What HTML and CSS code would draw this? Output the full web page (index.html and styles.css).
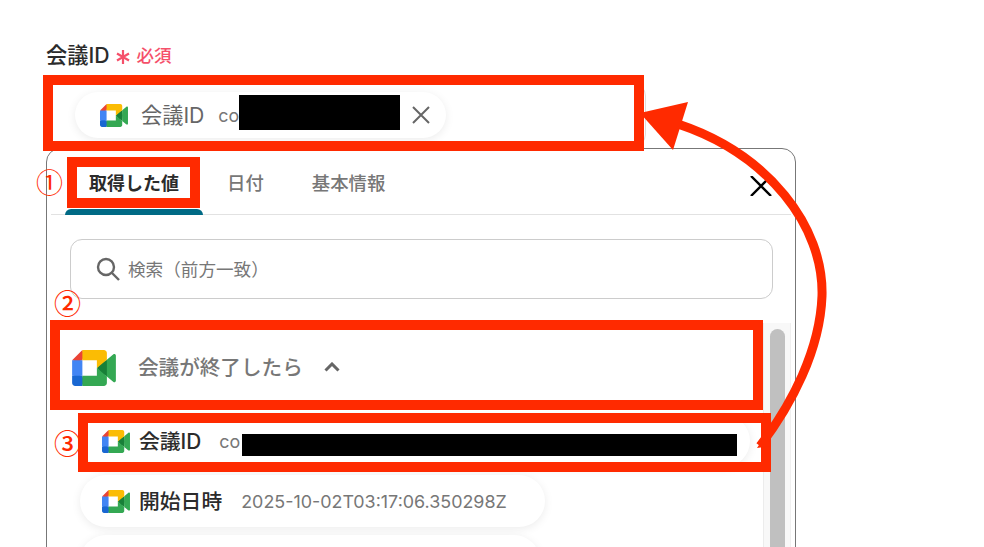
FILE: index.html
```html
<!DOCTYPE html>
<html lang="ja">
<head>
    <meta charset="UTF-8">
    <meta name="viewport" content="width=device-width, initial-scale=1.0">
    <title>会議ID</title>
    <link rel="stylesheet" href="styles.css">
</head>
<body>
    <svg class="defs" width="0" height="0">
        <symbol id="meet" viewBox="0 0 87.5 72">
            <path fill="#188038" d="M49.5 36l8.53 9.75 11.47 7.33 2-17.02-2-16.64-11.69 6.44z"/>
            <path fill="#1967d2" d="M0 51.5V66c0 3.315 2.685 6 6 6h14.5l3-10.96-3-9.54-9.95-3z"/>
            <path fill="#ea4335" d="M20.5 0L0 20.5l10.55 3 9.95-3 2.95-9.41z"/>
            <path fill="#4285f4" d="M20.5 20.5H0v31h20.5z"/>
            <path fill="#34a853" d="M82.6 8.68L69.5 19.42v33.66l13.16 10.79c1.97 1.54 4.85.135 4.85-2.37V11c0-2.535-2.945-3.925-4.91-2.32zM49.5 36v15.5h-29V72h43c3.315 0 6-2.685 6-6V53.08z"/>
            <path fill="#fbbc04" d="M63.5 0h-43v20.5h29V36l20-16.57V6c0-3.315-2.685-6-6-6z"/>
        </symbol>
    </svg>

    <main class="form">
        <div class="field-label">
            <span>会議ID</span>
            <svg class="star" viewBox="0 0 14 14"><path d="M7 0V14M1 3.5L13 10.500M13 3.500L1 10.500"/></svg>
            <span class="required">必須</span>
        </div>

        <div class="field">
            <div class="chip chip-selected">
                <svg class="meet-small"><use href="#meet"/></svg>
                <span class="chip-name">会議ID</span>
                <span class="chip-value">co</span>
                <span class="redact redact-selected"></span>
                <svg class="chip-remove" viewBox="0 0 18 18"><path d="M1 1L17 17M17 1L1 17"/></svg>
            </div>
        </div>

        <section class="popup">
            <div class="tabs">
                <div class="tab tab-active">取得した値</div>
                <div class="tab">日付</div>
                <div class="tab">基本情報</div>
                <svg class="popup-close" viewBox="0 0 22 20"><path d="M1 0L21 20M21 0L1 20"/></svg>
            </div>

            <div class="search">
                <svg class="search-icon" viewBox="0 0 24 24"><circle cx="10" cy="10" r="8"/><path d="M16 16L23 23"/></svg>
                <span class="search-text">検索（前方一致）</span>
            </div>

            <div class="results">
                <div class="list">
                    <div class="group-head">
                        <svg class="meet-large"><use href="#meet"/></svg>
                        <span class="group-title">会議が終了したら</span>
                        <svg class="chevron" viewBox="0 0 16 10"><path d="M1.5 8.5L8 2L14.5 8.5"/></svg>
                    </div>
                    <div class="chip chip-row chip-first">
                        <svg class="meet-small"><use href="#meet"/></svg>
                        <span class="row-name">会議ID</span>
                        <span class="chip-value">co</span>
                        <span class="redact redact-row"></span>
                    </div>
                    <div class="chip chip-row chip-date">
                        <svg class="meet-small"><use href="#meet"/></svg>
                        <span class="row-name">開始日時</span>
                        <span class="chip-value">2025-10-02T03:17:06.350298Z</span>
                    </div>
                    <div class="chip chip-row chip-last"></div>
                </div>
                <div class="scrollbar"><div class="thumb"></div></div>
            </div>
        </section>
    </main>

    <!-- annotations drawn over the screenshot -->
    <div class="mark mark-field"></div>
    <div class="mark mark-tab"></div>
    <div class="mark mark-group"></div>
    <div class="mark mark-row"></div>
    <span class="step step-1">①</span>
    <span class="step step-2">②</span>
    <span class="step step-3">③</span>
    <svg class="arrow" viewBox="0 0 984 547">
        <path class="arrow-line" d="M678 124C768 154 824 226 822 296C820 350 792 404 760 446"/>
        <path class="arrow-head" d="M640 113L688 102L673 150Z"/>
        <path class="arrow-head" d="M757 448L766 434L771 446Z"/>
    </svg>
</body>
</html>
```

FILE: styles.css
```css
html, body {
    margin: 0;
    padding: 0;
    height: 547px;
    overflow: hidden;
    background: #fff;
}

body {
    position: relative;
    font-family: "Inter", "Noto Sans CJK JP", sans-serif;
    color: #2b2b2b;
}

.defs {
    position: absolute;
}

.form {
    box-sizing: border-box;
    width: 796px;
    height: 547px;
    overflow: hidden;
    padding: 42px 0 0 46px;
}

.field-label {
    display: flex;
    align-items: center;
    box-sizing: border-box;
    height: 26px;
    padding-bottom: 4px;
    font-size: 21.2px;
    font-weight: 500;
}

.star {
    width: 14px;
    height: 14px;
    margin: 7px 0 0 7px;
    fill: none;
    stroke: #f5506a;
    stroke-width: 2.2;
}

.required {
    margin: 2px 0 0 6px;
    font-size: 17.5px;
    color: #f5506a;
}

.field {
    display: flex;
    align-items: center;
    box-sizing: border-box;
    width: 600px;
    height: 66px;
    margin-top: 14px;
    padding-left: 28px;
    border: 1px solid #ddd;
    border-radius: 14px;
}

.chip {
    display: flex;
    align-items: center;
    box-sizing: border-box;
    background: #fff;
    border-radius: 26px;
    box-shadow: 0 2px 10px rgba(0, 0, 0, .08);
}

.chip-selected {
    width: 371px;
    height: 46px;
    padding-left: 25px;
}

.meet-small {
    width: 28px;
    height: 23px;
    flex: none;
}

.chip-name {
    margin: 0 0 4px 13px;
    font-size: 21.2px;
    color: #666;
}

.chip-value {
    margin-left: 14px;
    font-size: 17.9px;
    color: #777;
    white-space: nowrap;
}

.redact {
    display: block;
    background: #000;
    flex: none;
}

.redact-selected {
    width: 161px;
    height: 35px;
    margin-bottom: 5px;
}

.chip-remove {
    width: 18px;
    height: 18px;
    margin-left: 12px;
    fill: none;
    stroke: #666;
    stroke-width: 2;
}

.popup {
    box-sizing: border-box;
    width: 750px;
    height: 500px;
    border: 1px solid #777;
    border-radius: 14px 14px 0 0;
}

.tabs {
    display: flex;
    align-items: center;
    height: 65px;
    margin: 0 4px;
    padding-left: 14px;
    border-bottom: 1px solid #e2e2e2;
}

.tab {
    display: flex;
    align-items: center;
    box-sizing: border-box;
    height: 65px;
    padding: 0 24px;
    font-size: 18.4px;
    font-weight: 500;
    color: #777;
}

.tab-active {
    font-size: 18px;
    font-weight: 700;
    color: #2b2b2b;
    position: relative;
}

.tab-active:after {
    content: "";
    position: absolute;
    left: 0;
    right: 0;
    bottom: -1px;
    height: 6px;
    background: #006a85;
    border-radius: 6px 6px 0 0;
}

.popup-close {
    width: 22px;
    height: 20px;
    margin: 8px 19px 0 auto;
    fill: none;
    stroke: #000;
    stroke-width: 2.4;
}

.search {
    display: flex;
    align-items: center;
    box-sizing: border-box;
    width: 703px;
    height: 60px;
    margin: 24px 0 0 23px;
    padding-left: 25px;
    border: 1px solid #ccc;
    border-radius: 12px;
    font-size: 17.6px;
    color: #777;
}

.search-icon {
    width: 24px;
    height: 24px;
    margin-right: 8px;
    fill: none;
    stroke: #666;
    stroke-width: 2.4;
}

.search-text {
    margin-bottom: 2px;
}

.results {
    display: flex;
    margin-top: 24px;
}

.list {
    width: 716px;
}

.group-head {
    display: flex;
    align-items: center;
    height: 90px;
    padding-left: 25px;
}

.meet-large {
    width: 44px;
    height: 36px;
    flex: none;
}

.group-title {
    margin: 0 0 4px 22px;
    font-size: 20.6px;
    font-weight: 500;
    color: #777;
}

.chevron {
    width: 16px;
    height: 10px;
    margin: 0 0 2px 21px;
    fill: none;
    stroke: #666;
    stroke-width: 3;
}

.chip-row {
    height: 52px;
    margin: 8px 0 0 33px;
    padding-left: 22px;
}

.chip-first {
    width: 670px;
    margin-top: 2px;
}

.chip-date {
    width: 465px;
}

.chip-last {
    width: 460px;
}

.row-name {
    margin: 0 0 2px 9px;
    font-size: 20.8px;
    font-weight: 500;
}

.chip-row .chip-value {
    margin: 0 0 0 19px;
}

.chip-first .chip-value {
    margin-left: 18px;
}

.redact-row {
    width: 495px;
    height: 22px;
    margin: 8px 0 0 2px;
}

.scrollbar {
    flex: none;
    box-sizing: border-box;
    width: 28px;
    height: 230px;
    padding: 6px 5px 0 6px;
    background: #f8f8f8;
    border-left: 1px solid #ececec;
    border-right: 1px solid #f0f0f0;
}

.thumb {
    height: 224px;
    background: #c0c0c0;
    border-radius: 8px 8px 0 0;
}

/* annotations */
.mark {
    position: absolute;
    box-sizing: border-box;
    border: 10px solid #ff2a00;
}

.mark-field {
    left: 43px;
    top: 75px;
    width: 601px;
    height: 76px;
}

.mark-tab {
    left: 67px;
    top: 157px;
    width: 133px;
    height: 51px;
}

.mark-group {
    left: 50px;
    top: 320px;
    width: 713px;
    height: 90px;
}

.mark-row {
    left: 78px;
    top: 413px;
    width: 693px;
    height: 59px;
}

.step {
    position: absolute;
    font-family: "Noto Sans CJK JP", sans-serif;
    font-size: 27px;
    line-height: 30px;
    color: #ff2a00;
}

.step-1 {
    left: 36px;
    top: 167px;
}

.step-2 {
    left: 54px;
    top: 288px;
    font-weight: 500;
}

.step-3 {
    left: 54px;
    top: 428px;
    font-weight: 500;
}

.arrow {
    position: absolute;
    left: 0;
    top: 0;
    width: 984px;
    height: 547px;
}

.arrow-line {
    fill: none;
    stroke: #ff2a00;
    stroke-width: 9;
}

.arrow-head {
    fill: #ff2a00;
}
```
